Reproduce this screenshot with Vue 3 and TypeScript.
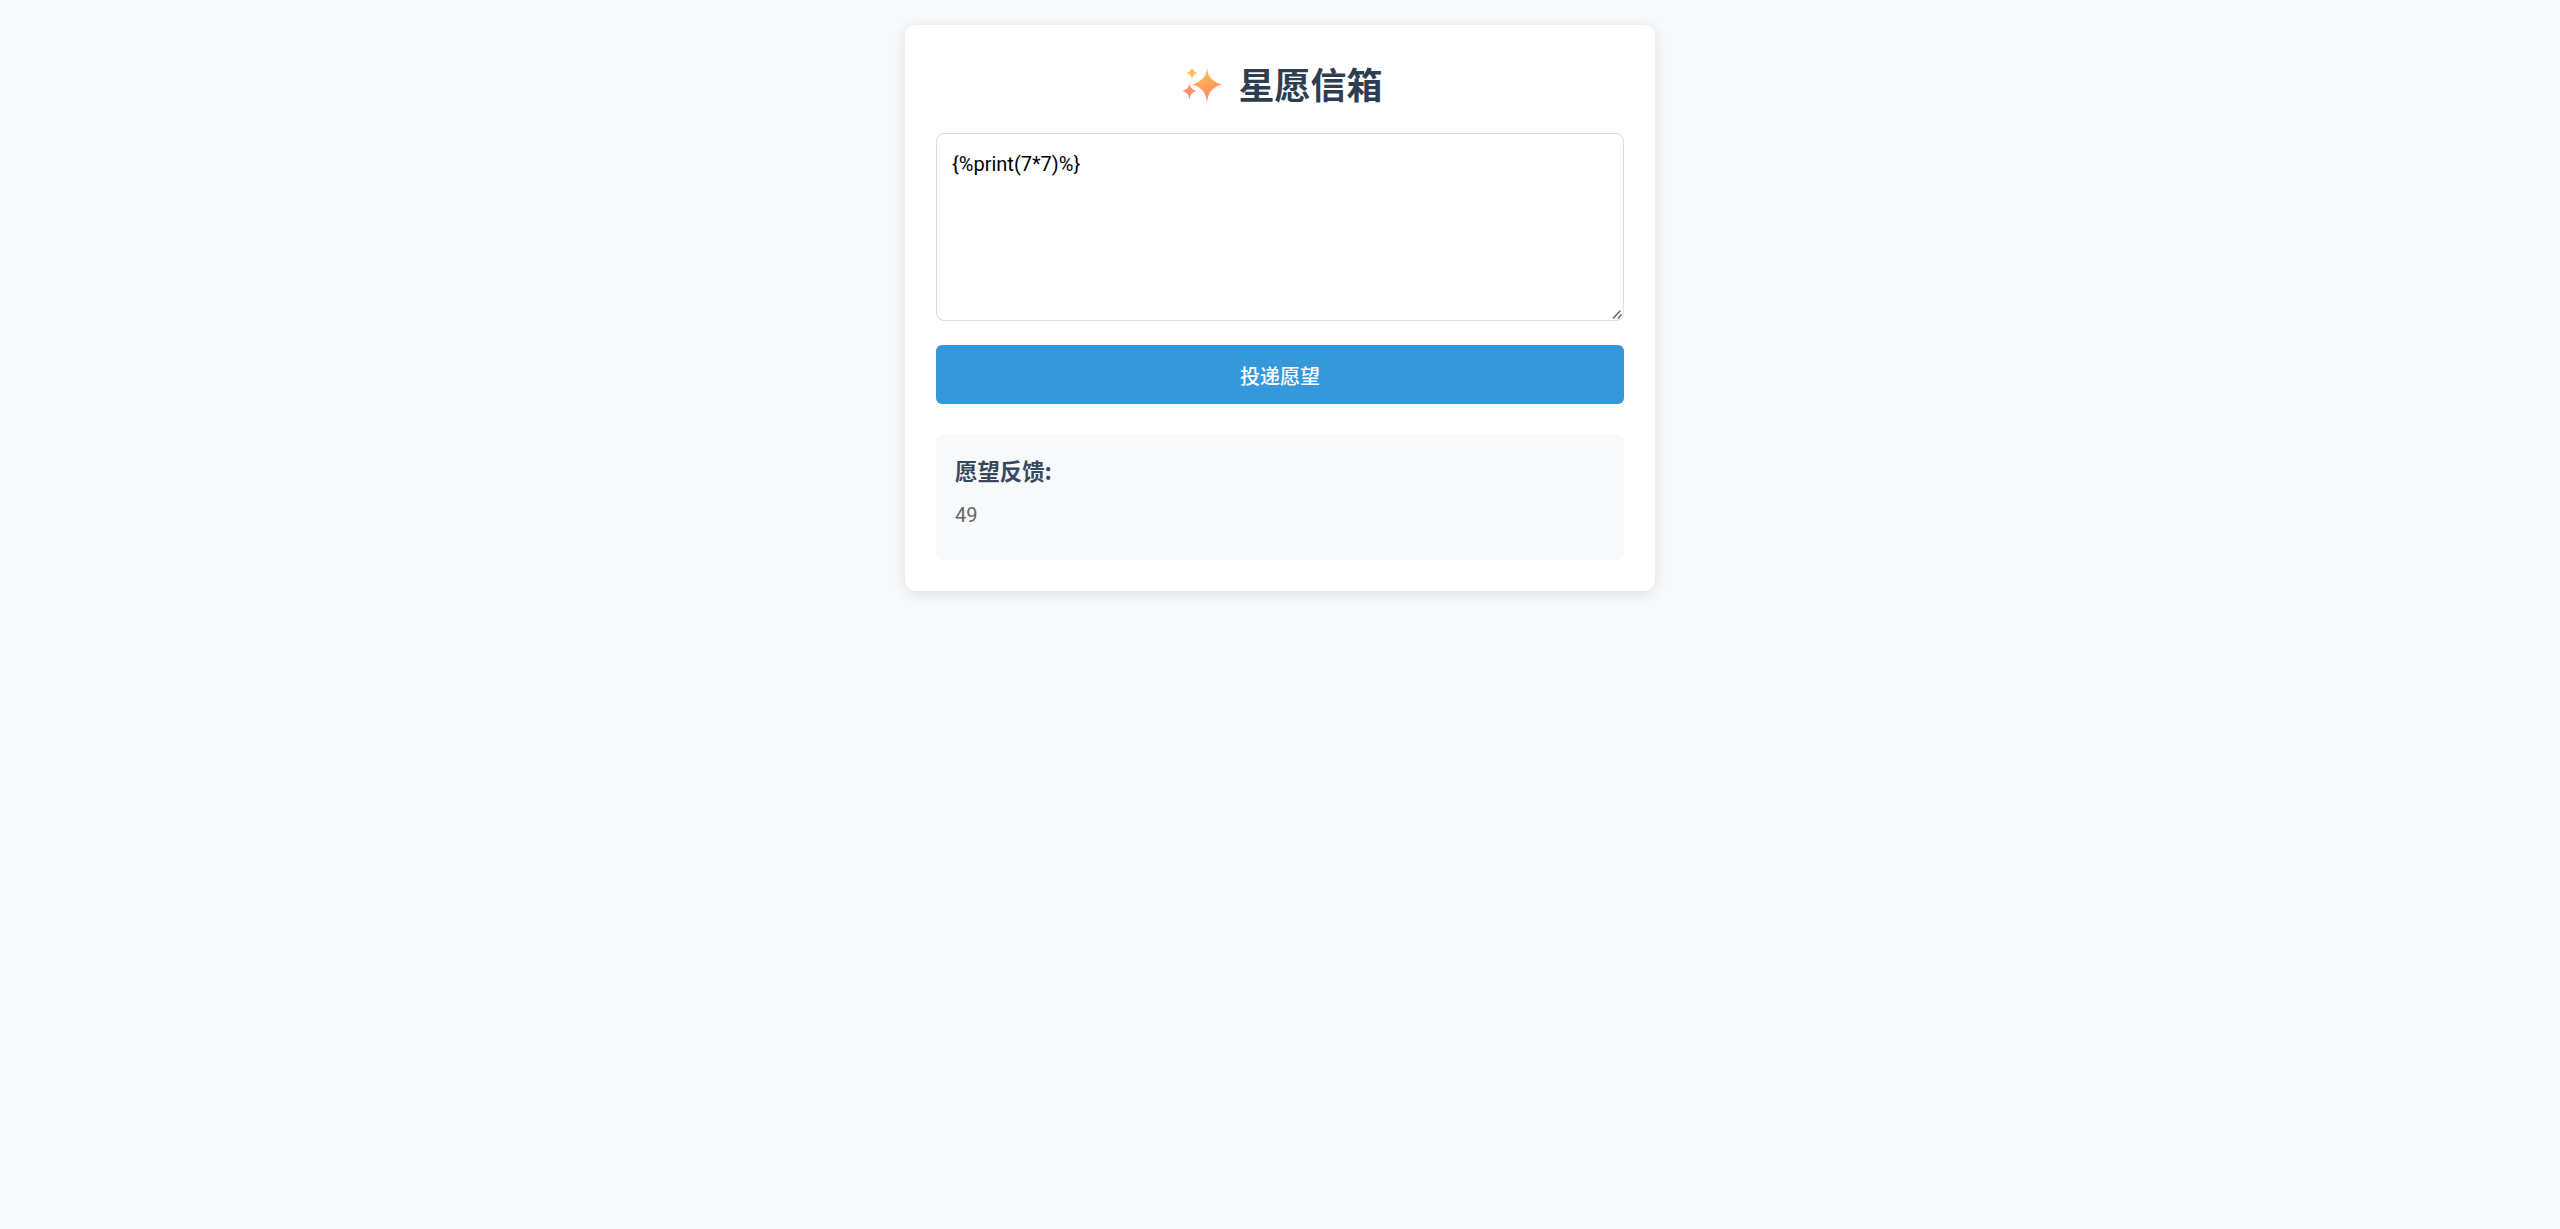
<script setup lang="ts">
import { ref } from 'vue'
const wish = ref('{%print(7*7)%}')
</script>

<template>
  <main class="page">
    <section class="card">
      <h1 class="title">
        <svg class="sparkle" viewBox="0 0 40 36" aria-hidden="true">
          <defs>
            <linearGradient id="sp" x1="0" y1="0" x2="0.25" y2="1">
              <stop offset="0" stop-color="#ffc84f" />
              <stop offset="1" stop-color="#ff8664" />
            </linearGradient>
          </defs>
          <path fill="url(#sp)" d="M24 1C25 10 29 14 38.5 17.5 29 21 25.4 25 24 35 22.6 25 19 21 9.5 17.5 19 14 23 10 24 1Z" />
          <path fill="#ffbd63" d="M9 0C9.8 3.4 11 4.8 14.5 6 11 7.2 9.8 8.6 9 12.5 8.2 8.6 7 7.2 3.5 6 7 4.8 8.2 3.4 9 0Z" />
          <path fill="#ff8f6d" d="M6.5 16.5C7.5 20.8 9 22.4 13.5 24 9 25.6 7.5 27.2 6.5 32.5 5.5 27.2 4 25.6-.5 24 4 22.4 5.5 20.8 6.5 16.5Z" />
        </svg>
        <span>星愿信箱</span>
      </h1>
      <form class="wish-form" @submit.prevent>
        <div class="input-wrap">
          <textarea v-model="wish" class="wish-input"></textarea>
          <svg class="grip" viewBox="0 0 10 10" aria-hidden="true">
            <path d="M1 9.5 8.5 1.5M6 9.5 9.5 5.5" fill="none" stroke="#666" stroke-width="1.5" />
          </svg>
        </div>
        <button class="submit" type="submit">投递愿望</button>
      </form>
      <div class="result">
        <h3 class="result-title">愿望反馈:</h3>
        <p class="result-text">49</p>
      </div>
    </section>
  </main>
</template>

<style>
html, body { margin: 0; background: #f8f9fa; }
</style>

<style scoped>
.page {
  min-height: 1229px;
  box-sizing: border-box;
  padding-top: 25px;
  background: #f8f9fa;
  font-family: Roboto, "Noto Sans CJK SC", sans-serif;
}
.card {
  width: 750px;
  box-sizing: border-box;
  margin: 0 auto;
  padding: 31px;
  background: #fff;
  border-radius: 10px;
  box-shadow: 0 2.5px 12.5px rgba(0, 0, 0, 0.1);
}
.title {
  display: flex;
  justify-content: center;
  align-items: center;
  gap: 15px;
  height: 48px;
  margin: 3px 0 26px;
  padding-left: 6px;
  color: #2c3e50;
  font-family: "Noto Sans CJK SC", sans-serif;
  font-size: 36px;
  font-weight: 700;
  line-height: 48px;
}
.sparkle { width: 40px; height: 36px; flex: none; margin-top: 3px; }
.wish-form { display: flex; flex-direction: column; gap: 24px; }
.input-wrap { position: relative; height: 188px; }
.wish-input {
  display: block;
  width: 100%;
  height: 188px;
  box-sizing: border-box;
  padding: 17px 15px;
  border: 1.5px solid #ddd;
  border-radius: 8px;
  background: #fff;
  color: #000;
  font: 20px/27px Roboto, "Noto Sans CJK SC", sans-serif;
  outline: none;
  resize: vertical;
}
.wish-input::-webkit-resizer { display: none; }
.grip {
  position: absolute;
  right: 2px;
  bottom: 2px;
  width: 10px;
  height: 10px;
  pointer-events: none;
}
.submit {
  display: block;
  width: 100%;
  height: 59px;
  padding: 2px 0 0;
  border: 0;
  border-radius: 6px;
  background: #3498db;
  color: #fff;
  font: 500 20px/27px "Noto Sans CJK SC", sans-serif;
}
.result {
  margin-top: 31px;
  padding: 20px 19px;
  height: 125px;
  box-sizing: border-box;
  background: #f8f9fa;
  border-radius: 6px;
}
.result-title {
  margin: 0 0 17px;
  color: #34495e;
  font-family: "Noto Sans CJK SC", sans-serif;
  font-size: 22.4px;
  font-weight: 700;
  line-height: 30px;
}
.result-text {
  margin: 0;
  color: #666;
  font-size: 20px;
  line-height: 27px;
}
</style>
